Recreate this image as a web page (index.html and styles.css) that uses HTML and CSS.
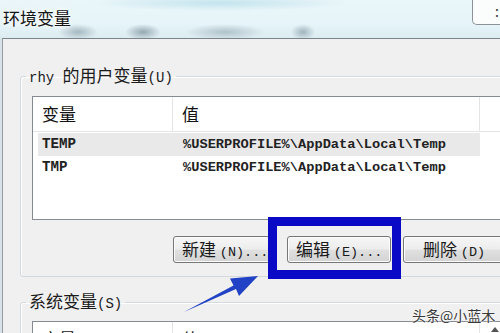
FILE: index.html
```html
<!DOCTYPE html>
<html lang="zh">
<head>
  <meta charset="UTF-8" />
  <title>环境变量</title>
  <link rel="stylesheet" href="styles.css">
</head>
<body>
  <div class="window">
    <div class="titlebar">
      <div class="title">环境变量</div>
      <div class="close-btn"><span>:</span></div>
    </div>

    <div class="dialog">
      <fieldset class="group user-group">
        <legend><span class="en">rhy </span>的用户变量<span class="en">(U)</span></legend>
        <div class="list">
          <div class="list-head">
            <div class="col-name">变量</div>
            <div class="col-value">值</div>
            <div class="col-rest"></div>
          </div>
          <div class="list-body">
            <div class="list-row selected">
              <div class="col-name">TEMP</div>
              <div class="col-value">%USERPROFILE%\AppData\Local\Temp</div>
            </div>
            <div class="list-row">
              <div class="col-name">TMP</div>
              <div class="col-value">%USERPROFILE%\AppData\Local\Temp</div>
            </div>
          </div>
        </div>
        <div class="buttons">
          <button class="btn btn-new">新建 <span class="en">(N)...</span></button>
          <button class="btn btn-edit">编辑 <span class="en">(E)...</span></button>
          <button class="btn btn-del">删除 <span class="en">(D)</span></button>
        </div>
      </fieldset>

      <fieldset class="group sys-group">
        <legend>系统变量<span class="en">(S)</span></legend>
        <div class="list">
          <div class="list-head">
            <div class="col-name">变量</div>
            <div class="col-value">值</div>
            <div class="col-rest"></div>
          </div>
        </div>
      </fieldset>
    </div>

    <!-- 标注：蓝框 + 箭头 -->
    <div class="highlight"></div>
    <svg class="arrow" width="500" height="333" viewBox="0 0 500 333">
      <polygon points="184,312 236,289 239,296 258,276 230,278.5 233.5,285.5" fill="#2142c4" />
    </svg>
    <div class="watermark">头条@小蓝木</div>
    <div class="scroll-up"></div>
  </div>
</body>
</html>
```

FILE: styles.css
```css
* {
  box-sizing: border-box;
}

body {
  margin: 0;
  width: 500px;
  height: 333px;
  overflow: hidden;
  font-family: "Noto Sans CJK SC", sans-serif;
  color: #111;
}

.en {
  font-family: "Liberation Mono", monospace;
  font-size: 14px;
}

.window {
  position: relative;
  width: 500px;
  height: 333px;
  overflow: hidden;
  background: #d7e1e8;
}

.titlebar {
  height: 38px;
  display: flex;
  align-items: center;
  padding-left: 3px;
  background:
    radial-gradient(ellipse 20px 8px at 78px 32px, rgba(120, 140, 150, 0.55), transparent),
    radial-gradient(ellipse 18px 8px at 143px 32px, rgba(100, 120, 135, 0.6), transparent),
    radial-gradient(ellipse 40px 8px at 225px 32px, rgba(130, 150, 160, 0.5), transparent),
    radial-gradient(ellipse 12px 8px at 303px 32px, rgba(110, 130, 145, 0.55), transparent),
    radial-gradient(ellipse 130px 8px at 220px 3px, rgba(170, 215, 230, 0.6), transparent),
    linear-gradient(to bottom, #eaf6f9, #e6f5f9 60%, #dcecf1);
}

.title {
  font-size: 17px;
  line-height: 20px;
  margin-top: -3px;
  color: #161616;
  text-shadow: 0 0 6px #fff, 0 0 3px #fff;
}

.close-btn {
  margin-left: auto;
  align-self: flex-start;
  width: 28px;
  height: 25px;
  background: #fbfdfd;
  border: 1px solid #8c9296;
  border-top: none;
  border-right: none;
  border-radius: 0 0 0 5px;
  font-size: 14px;
  line-height: 22px;
  text-align: right;
  padding-right: 1px;
  color: #333;
}

.dialog {
  margin-left: 2px;
  height: 295px;
  background: #f0f0f0;
  border-top: 1px solid #7d858c;
  border-left: 1px solid #959ca2;
  padding-left: 17px;
}

.group {
  width: 620px;
  margin: 0;
  border: 1px solid #d3d9de;
  border-radius: 3px;
  box-shadow: inset 1px 1px 0 #fff;
  padding: 8px 0 13px 11px;
}

.group legend {
  font-size: 17px;
  line-height: 20px;
  padding: 0 3px;
  margin-left: -6px;
  color: #1b1b1b;
}

.user-group {
  margin-top: 26px;
}

.sys-group {
  margin-top: 14px;
  padding-top: 7px;
}

.list {
  background: #fff;
  border: 1px solid #868b91;
  height: 124px;
}

.list-head {
  display: flex;
  height: 35px;
  border-bottom: 1px solid #e2e4e6;
  font-size: 17px;
  line-height: 34px;
}

.list-head .col-name {
  width: 140px;
  border-right: 1px solid #e2e4e6;
}

.list-head .col-value {
  width: 307px;
  border-right: 1px solid #e2e4e6;
}

.col-name {
  padding-left: 9px;
}

.col-value {
  padding-left: 9px;
}

.list-body {
  padding-top: 1px;
  font-family: "Liberation Mono", monospace;
  font-size: 13.7px;
  font-weight: bold;
  color: #222;
}

.list-row {
  display: flex;
  height: 23px;
  line-height: 23px;
  margin-left: 5px;
  width: 442px;
}

.list-row .col-name {
  width: 136px;
  padding-left: 4px;
  font-size: 14.2px;
}

.list-row.selected {
  background: #e9e9e9;
}

.buttons {
  display: flex;
  margin-top: 16px;
  padding-left: 141px;
}

.btn {
  height: 27px;
  padding: 0 0 0 8px;
  text-align: left;
  white-space: nowrap;
  overflow: hidden;
  font-family: "Noto Sans CJK SC", sans-serif;
  font-size: 17px;
  line-height: 24px;
  color: #1a1a1a;
  border: 1px solid #767676;
  border-radius: 3px;
  background: linear-gradient(to bottom, #f6f6f6 0%, #ededed 48%, #e0e0e0 52%, #d3d3d3 100%);
  box-shadow: inset 0 0 0 1px #fcfcfc;
}

.btn .en {
  font-size: 13.5px;
}

.btn-new {
  width: 97px;
}

.btn-edit {
  width: 104px;
  margin-left: 17px;
}

.btn-del {
  width: 105px;
  margin-left: 12px;
  padding-left: 19px;
}

.highlight {
  position: absolute;
  left: 268px;
  top: 217px;
  width: 133px;
  height: 62px;
  border: 9px solid #0a0ac6;
}

.arrow {
  position: absolute;
  left: 0;
  top: 0;
}

.watermark {
  position: absolute;
  left: 412px;
  top: 305px;
  font-size: 14px;
  line-height: 20px;
  color: #3a3a3a;
  text-shadow: 0 0 2px #fff, 0 0 2px #fff;
}

.scroll-up {
  position: absolute;
  left: 491px;
  top: 327px;
  border-left: 4px solid transparent;
  border-right: 4px solid transparent;
  border-bottom: 5px solid #555;
}
```
